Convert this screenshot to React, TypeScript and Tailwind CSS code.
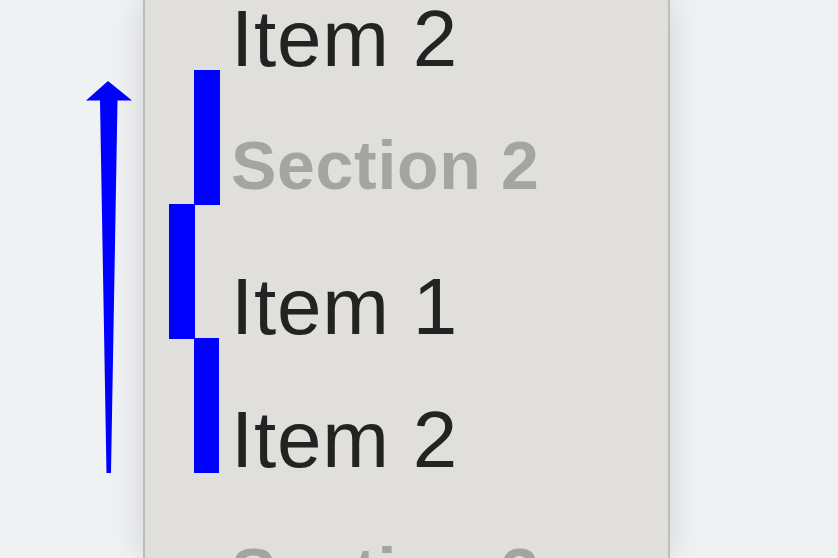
const font = { fontFamily: '"Liberation Sans", Arial, sans-serif' };

const rows = [
  { label: "Item 2", kind: "item", mt: "mt-[-1px]" },
  { label: "Section 2", kind: "section", mt: "mt-[52px]" },
  { label: "Item 1", kind: "item", mt: "mt-[68px]" },
  { label: "Item 2", kind: "item", mt: "mt-[53px]" },
  { label: "Section 3", kind: "section", mt: "mt-[58px]" },
];

const UpArrow = () => (
  <svg
    className="absolute left-0 top-0 pointer-events-none"
    width="838"
    height="558"
    viewBox="0 0 838 558"
  >
    <polygon
      points="108,81 132,100.5 117.5,100.5 111,473 106.5,473 100,100.5 86,100.5"
      fill="#0000ff"
    />
  </svg>
);

export default function App() {
  return (
    <div
      className="relative w-[838px] h-[558px] overflow-hidden bg-[#f0f1f3] flex"
      style={font}
    >
      <div className="ml-[143px] w-[527px] h-full bg-[#e0dfdb] border-x-2 border-[#bdbdbd] shadow-[0_0_34px_rgba(0,0,0,0.13)] pl-[86px] flex flex-col">
        {rows.map((row, i) =>
          row.kind === "item" ? (
            <div
              key={i}
              className={`${row.mt} text-[80px] leading-none tracking-[0.8px] text-[#232323] whitespace-nowrap`}
            >
              {row.label}
            </div>
          ) : (
            <div
              key={i}
              className={`${row.mt} text-[68px] leading-none tracking-[0.7px] font-bold text-[#a4a4a3] whitespace-nowrap`}
            >
              {row.label}
            </div>
          )
        )}
      </div>

      {/* annotation overlay */}
      <UpArrow />
      <div className="absolute left-[194px] top-[70px] w-[26px] h-[135px] bg-[#0000ff]" />
      <div className="absolute left-[169px] top-[204px] w-[26px] h-[135px] bg-[#0000ff]" />
      <div className="absolute left-[194px] top-[338px] w-[25px] h-[135px] bg-[#0000ff]" />
    </div>
  );
}
